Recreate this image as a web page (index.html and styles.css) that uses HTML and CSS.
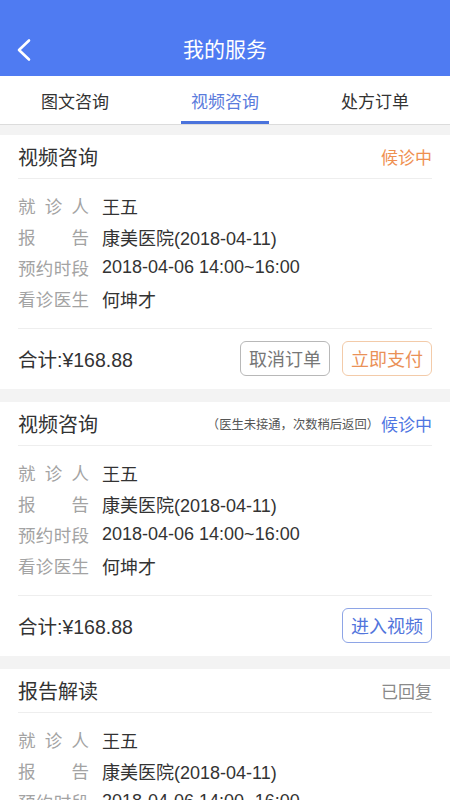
FILE: index.html
```html
<!DOCTYPE html>
<html lang="zh-CN">
<head>
<meta charset="utf-8">
<title>我的服务</title>
<link rel="stylesheet" href="styles.css">
</head>
<body>
<header class="topbar">
  <span class="back">
    <svg width="16" height="24" viewBox="0 0 16 24"><polyline points="13,2.5 3,12 13,21.5" fill="none" stroke="#fff" stroke-width="2.6" stroke-linecap="round" stroke-linejoin="round"/></svg>
  </span>
  <h1 class="title">我的服务</h1>
  <span></span>
</header>
<nav class="tabs">
  <div class="tab">图文咨询</div>
  <div class="tab active"><span>视频咨询</span></div>
  <div class="tab">处方订单</div>
</nav>
<main class="list">
  <section class="card">
    <div class="card-head">
      <span class="card-title">视频咨询</span>
      <span class="status orange">候诊中</span>
    </div>
    <div class="card-body">
      <div class="row"><span class="label">就诊人</span><span class="value">王五</span></div>
      <div class="row"><span class="label">报告</span><span class="value">康美医院(2018-04-11)</span></div>
      <div class="row"><span class="label">预约时段</span><span class="value">2018-04-06 14:00~16:00</span></div>
      <div class="row"><span class="label">看诊医生</span><span class="value">何坤才</span></div>
    </div>
    <div class="card-foot">
      <span class="total">合计:¥168.88</span>
      <div class="actions">
        <button class="btn gray">取消订单</button>
        <button class="btn orange">立即支付</button>
      </div>
    </div>
  </section>
  <section class="card">
    <div class="card-head">
      <span class="card-title">视频咨询</span>
      <span class="status-wrap"><span class="note">（医生未接通，次数稍后返回）</span><span class="status blue">候诊中</span></span>
    </div>
    <div class="card-body">
      <div class="row"><span class="label">就诊人</span><span class="value">王五</span></div>
      <div class="row"><span class="label">报告</span><span class="value">康美医院(2018-04-11)</span></div>
      <div class="row"><span class="label">预约时段</span><span class="value">2018-04-06 14:00~16:00</span></div>
      <div class="row"><span class="label">看诊医生</span><span class="value">何坤才</span></div>
    </div>
    <div class="card-foot">
      <span class="total">合计:¥168.88</span>
      <div class="actions">
        <button class="btn blue">进入视频</button>
      </div>
    </div>
  </section>
  <section class="card">
    <div class="card-head">
      <span class="card-title">报告解读</span>
      <span class="status gray">已回复</span>
    </div>
    <div class="card-body">
      <div class="row"><span class="label">就诊人</span><span class="value">王五</span></div>
      <div class="row"><span class="label">报告</span><span class="value">康美医院(2018-04-11)</span></div>
      <div class="row"><span class="label">预约时段</span><span class="value">2018-04-06 14:00~16:00</span></div>
      <div class="row"><span class="label">看诊医生</span><span class="value">何坤才</span></div>
    </div>
  </section>
</main>
</body>
</html>
```
FILE: styles.css
```css
* { box-sizing: border-box; }
html, body { margin: 0; padding: 0; }
body {
  width: 450px;
  background: #f3f3f3;
  font-family: "Liberation Sans", "Noto Sans CJK SC", sans-serif;
  color: #333;
  overflow: hidden;
}
.topbar {
  height: 76px;
  padding-top: 24px;
  background: #4f7bf2;
  display: grid;
  grid-template-columns: 48px 1fr 48px;
  align-items: center;
}
.back { display: flex; align-items: center; padding-left: 16px; height: 52px; }
.back svg { display: block; }
.title {
  margin: 0;
  text-align: center;
  color: #fff;
  font-size: 21px;
  font-weight: normal;
  line-height: 52px;
}
.tabs {
  display: grid;
  grid-template-columns: 1fr 1fr 1fr;
  height: 49px;
  background: #fff;
  border-bottom: 1px solid #dcdcdc;
}
.tab {
  display: flex;
  justify-content: center;
  align-items: center;
  font-size: 17px;
  color: #333;
}
.tab.active { align-items: stretch; }
.tab.active span {
  display: flex;
  align-items: center;
  padding: 0 10px;
  color: #5a7bdc;
  border-bottom: 3px solid #4a73dc;
  padding-top: 3px;
}
.list { padding-top: 10px; display: flex; flex-direction: column; gap: 13px; }
.card { background: #fff; padding: 0 18px; }
.card-head {
  height: 44px;
  display: flex;
  align-items: center;
  justify-content: space-between;
  border-bottom: 1px solid #eeeeee;
}
.card-title { font-size: 20px; color: #333; }
.status { font-size: 17px; }
.status.orange { color: #ef9050; }
.status.blue { color: #4f76e2; }
.status.gray { color: #8a8a8a; }
.status-wrap { display: flex; align-items: center; }
.note { font-size: 12.3px; color: #555; margin-right: 2px; }
.card-body { padding: 11px 0 14px; }
.row { display: flex; align-items: center; height: 31px; font-size: 18px; }
.label {
  display: inline-block;
  width: 71px;
  color: #a3a3a3;
  text-align: justify;
  text-align-last: justify;
  font-size: 17.5px;
}
.value { margin-left: 13px; color: #333; }
.card-foot {
  height: 61px;
  padding-bottom: 2px;
  border-top: 1px solid #eeeeee;
  display: flex;
  align-items: center;
  justify-content: space-between;
}
.total { font-size: 19.5px; color: #333; }
.actions { display: flex; gap: 12px; }
.btn {
  width: 90px;
  height: 35px;
  background: #fff;
  border-radius: 6px;
  font-family: inherit;
  font-size: 18px;
  padding: 0;
  display: flex;
  align-items: center;
  justify-content: center;
}
.btn.gray { border: 1px solid #b8b8b8; color: #777; }
.btn.orange { border: 1px solid #f3cba9; color: #ea9157; }
.btn.blue { border: 1px solid #8ea5e6; color: #5275dc; }
```
